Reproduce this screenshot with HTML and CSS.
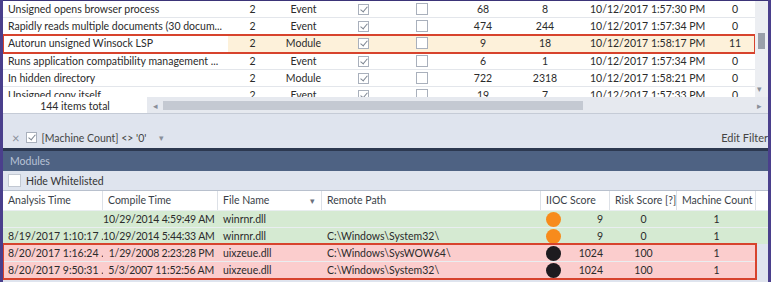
FILE: index.html
```html
<!DOCTYPE html>
<html lang="en">
<head>
  <meta charset="UTF-8" />
  <title>Alerts - Modules</title>
  <link rel="stylesheet" href="styles.css">
</head>
<body>
<div class="window">

  <div class="alerts">
    <div class="alerts-body">
      <div class="alert-rows">
        <div class="arow">
          <span class="c-name">Unsigned opens browser process</span><span class="c-sev">2</span><span class="c-type">Event</span>
          <span class="c-chk"><i class="cb on"></i></span><span class="c-chk2"><i class="cb"></i></span>
          <span class="c-n1">68</span><span class="c-n2">8</span><span class="c-date">10/12/2017 1:57:30 PM</span><span class="c-last">0</span>
        </div>
        <div class="arow">
          <span class="c-name">Rapidly reads multiple documents (30 docum...</span><span class="c-sev">2</span><span class="c-type">Event</span>
          <span class="c-chk"><i class="cb on"></i></span><span class="c-chk2"><i class="cb"></i></span>
          <span class="c-n1">474</span><span class="c-n2">244</span><span class="c-date">10/12/2017 1:57:34 PM</span><span class="c-last">0</span>
        </div>
        <div class="arow selected">
          <span class="c-name">Autorun unsigned Winsock LSP</span><span class="c-sev">2</span><span class="c-type">Module</span>
          <span class="c-chk"><i class="cb on"></i></span><span class="c-chk2"><i class="cb"></i></span>
          <span class="c-n1">9</span><span class="c-n2">18</span><span class="c-date">10/12/2017 1:58:17 PM</span><span class="c-last">11</span>
        </div>
        <div class="arow">
          <span class="c-name">Runs application compatibility management ...</span><span class="c-sev">2</span><span class="c-type">Event</span>
          <span class="c-chk"><i class="cb on"></i></span><span class="c-chk2"><i class="cb"></i></span>
          <span class="c-n1">6</span><span class="c-n2">1</span><span class="c-date">10/12/2017 1:57:34 PM</span><span class="c-last">0</span>
        </div>
        <div class="arow">
          <span class="c-name">In hidden directory</span><span class="c-sev">2</span><span class="c-type">Module</span>
          <span class="c-chk"><i class="cb on"></i></span><span class="c-chk2"><i class="cb"></i></span>
          <span class="c-n1">722</span><span class="c-n2">2318</span><span class="c-date">10/12/2017 1:58:21 PM</span><span class="c-last">0</span>
        </div>
        <div class="arow">
          <span class="c-name">Unsigned copy itself</span><span class="c-sev">2</span><span class="c-type">Event</span>
          <span class="c-chk"><i class="cb on"></i></span><span class="c-chk2"><i class="cb"></i></span>
          <span class="c-n1">19</span><span class="c-n2">7</span><span class="c-date">10/12/2017 1:57:33 PM</span><span class="c-last">0</span>
        </div>
      </div>
      <div class="vscroll">
        <div class="vthumb"></div>
        <span class="vdown">&#9662;</span>
      </div>
    </div>
    <div class="alerts-foot">
      <div class="total">144 items total</div>
      <div class="hscroll">
        <span class="arrow">&#9666;</span>
        <div class="hthumb"></div>
        <span class="arrow right">&#9656;</span>
      </div>
    </div>
  </div>

  <div class="filter-bar">
    <span class="filter-x">&#215;</span>
    <i class="cb on"></i>
    <span class="filter-text">[Machine Count] &lt;&gt; '0'</span>
    <span class="filter-drop">&#9662;</span>
    <span class="edit-filter">Edit Filter</span>
  </div>

  <div class="modules">
    <div class="modules-title">Modules</div>
    <div class="whitelist"><i class="cb plain"></i>Hide Whitelisted</div>
    <div class="mgrid mhead">
      <span>Analysis Time</span>
      <span>Compile Time</span>
      <span class="sorted">File Name <b>&#9662;</b></span>
      <span>Remote Path</span>
      <span>IIOC Score</span>
      <span>Risk Score [?]</span>
      <span>Machine Count</span>
    </div>
    <div class="mgrid mrow green">
      <span></span>
      <span class="right">10/29/2014 4:59:49 AM</span>
      <span>winrnr.dll</span>
      <span></span>
      <span class="iioc"><i class="dot orange"></i>9</span>
      <span class="center">0</span>
      <span class="center">1</span>
    </div>
    <div class="mgrid mrow green">
      <span>8/19/2017 1:10:17 ...</span>
      <span class="right">10/29/2014 5:44:33 AM</span>
      <span>winrnr.dll</span>
      <span>C:\Windows\System32\</span>
      <span class="iioc"><i class="dot orange"></i>9</span>
      <span class="center">0</span>
      <span class="center">1</span>
    </div>
    <div class="flagged">
      <div class="mgrid mrow red">
        <span>8/20/2017 1:16:24 ...</span>
        <span class="right">1/29/2008 2:23:28 PM</span>
        <span>uixzeue.dll</span>
        <span>C:\Windows\SysWOW64\</span>
        <span class="iioc"><i class="dot black"></i>1024</span>
        <span class="center">100</span>
        <span class="center">1</span>
      </div>
      <div class="mgrid mrow red">
        <span>8/20/2017 9:50:31 ...</span>
        <span class="right">5/3/2007 11:52:56 AM</span>
        <span>uixzeue.dll</span>
        <span>C:\Windows\System32\</span>
        <span class="iioc"><i class="dot black"></i>1024</span>
        <span class="center">100</span>
        <span class="center">1</span>
      </div>
    </div>
  </div>

</div>
</body>
</html>
```

FILE: styles.css
```css
body {
  margin: 0;
  font-family: Lato, "Noto Sans", sans-serif;
  font-size: 10.5px;
  color: #2b2b2b;
  background: #4a3f8c;
}

.window {
  width: 765px;
  height: 282px;
  margin-left: 3px;
  background: #dfe4ee;
  border-top: 1px solid #3b3478;
  box-sizing: border-box;
  overflow: hidden;
}

/* checkbox */
.cb {
  display: inline-block;
  width: 11px;
  height: 11px;
  border: 1px solid #a9b0bc;
  background: #fff;
  position: relative;
  box-sizing: border-box;
}

.cb.on::after {
  content: "";
  position: absolute;
  left: 3px;
  top: 0px;
  width: 3px;
  height: 6px;
  border: solid #7d8592;
  border-width: 0 1.5px 1.5px 0;
  transform: rotate(40deg);
}

/* alerts grid */
.alerts-body {
  display: flex;
  height: 96px;
  background: #fff;
  overflow: hidden;
}

.alert-rows {
  flex: 1;
  overflow: hidden;
}

.arow {
  display: grid;
  grid-template-columns: 227px 45px 57px 63px 53px 70px 54px 145px 36px;
  height: 16px;
  line-height: 16px;
  border-bottom: 1px solid #e3e6eb;
  white-space: nowrap;
}

.arow > span {
  overflow: hidden;
  text-align: center;
}

.arow .c-name {
  text-align: left;
  padding-left: 5px;
}

.arow .c-date {
  text-align: left;
  padding-left: 18px;
}

.arow .c-chk .cb,
.arow .c-chk2 .cb {
  vertical-align: -2px;
}

.arow .c-chk2 .cb {
  width: 12px;
  height: 12px;
}

.arow.selected {
  height: 17px;
  line-height: 17px;
  background: linear-gradient(to right, #fff 0, #fff 225px, #fdf1da 225px);
  outline: 2px solid #d7432d;
  outline-offset: -1px;
  position: relative;
}

.vscroll {
  width: 13px;
  background: #eceef2;
  position: relative;
}

.vthumb {
  position: absolute;
  left: 3px;
  top: 32px;
  width: 7px;
  height: 16px;
  background: #9aa0aa;
}

.vdown {
  position: absolute;
  left: 2px;
  top: 82px;
  font-size: 9px;
  color: #8a909a;
}

.alerts-foot {
  display: flex;
  height: 16px;
  border-bottom: 1px solid #c5cbd6;
}

.total {
  width: 144px;
  text-align: center;
  line-height: 19px;
  background: #fff;
}

.hscroll {
  flex: 1;
  display: flex;
  align-items: center;
  gap: 5px;
  background: #e6e9ef;
  padding: 0 6px;
}

.hscroll .arrow {
  font-size: 9px;
  color: #8a909a;
}

.hthumb {
  width: 420px;
  height: 9px;
  background: #c4c9d2;
}

.hscroll .right {
  margin-left: auto;
}

/* filter row */
.filter-bar {
  display: flex;
  align-items: center;
  height: 34px;
  padding: 13px 0 0 9px;
  gap: 4px;
  box-sizing: border-box;
  color: #444;
}

.filter-x {
  font-size: 13px;
  color: #8a8f99;
  margin-right: 2px;
}

.filter-text {
  margin-left: 1px;
}

.filter-drop {
  font-size: 9px;
  color: #8a8f99;
  margin-left: 9px;
}

.edit-filter {
  margin-left: auto;
  font-size: 11px;
}

/* modules */
.modules {
  border-top: 3px solid #2c3850;
}

.modules-title {
  height: 20px;
  line-height: 20px;
  background: #4e6283;
  color: #b9c3d6;
  padding-left: 7px;
}

.whitelist {
  height: 19px;
  display: flex;
  align-items: center;
  gap: 5px;
  padding-left: 5px;
  border-bottom: 1px solid #b8c0cd;
  color: #333;
}

.cb.plain {
  width: 13px;
  height: 13px;
  border-color: #c2c8d2;
}

.mgrid {
  display: grid;
  grid-template-columns: 100px 115px 104px 219px 69px 67px 79px 12px;
  height: 16px;
  line-height: 16px;
  white-space: nowrap;
}

.mgrid > span {
  padding-left: 5px;
  overflow: hidden;
}

.mhead {
  height: 19px;
  line-height: 19px;
  background: #fff;
  color: #3a3f48;
}

.mhead > span {
  border-right: 1px solid #dde1e7;
}

.mhead .sorted b {
  float: right;
  font-weight: normal;
  font-size: 9px;
  color: #6b717c;
  margin-right: 6px;
}

.mrow {
  border-top: 1px solid #e9eef0;
}

.mrow.green {
  background: #d5ead2;
}

.mrow.red {
  background: #fbcdcd;
}

.mgrid.mrow > .right {
  text-align: right;
  padding-left: 0;
  padding-right: 4px;
  letter-spacing: -0.2px;
}

.mgrid.mrow > .center {
  text-align: center;
  padding-left: 0;
}

.mrow .iioc {
  display: flex;
  align-items: center;
  justify-content: space-between;
  padding-right: 7px;
  overflow: visible;
}

.dot {
  width: 15px;
  height: 15px;
  border-radius: 50%;
  display: inline-block;
}

.dot.orange {
  background: #f78b1c;
}

.dot.black {
  background: #1d1b1f;
}

.flagged {
  outline: 2px solid #d7432d;
  outline-offset: -1px;
  margin-right: 12px;
  position: relative;
  border-bottom: 1px solid #d7432d;
}
```
